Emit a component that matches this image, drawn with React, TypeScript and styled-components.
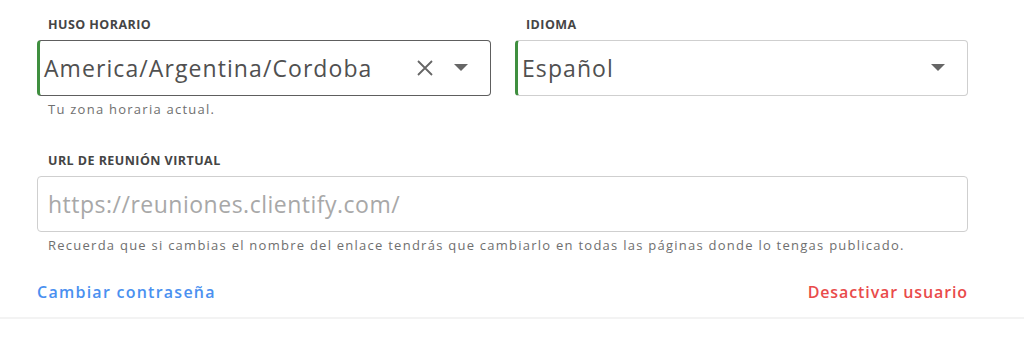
import React from "react";
import styled, { createGlobalStyle } from "styled-components";

const Global = createGlobalStyle`
  html, body { margin: 0; padding: 0; background: #ffffff; }
  body { font-family: "Open Sans", "Liberation Sans", sans-serif; }
`;

const Page = styled.div`
  width: 1024px;
  height: 350px;
  background: #fff;
  display: flex;
  flex-direction: column;
`;

const Form = styled.div`
  padding: 16px 56px 0 37px;
  display: flex;
  flex-direction: column;
`;

const Row = styled.div`
  display: grid;
  grid-template-columns: 454px 453px;
  column-gap: 24px;
`;

const Field = styled.div`
  display: flex;
  flex-direction: column;
`;

const Label = styled.div`
  font-size: 12.5px;
  font-weight: 700;
  color: #454545;
  text-transform: uppercase;
  padding-left: 11px;
  line-height: 17px;
  height: 24px;
  letter-spacing: 0.45px;
`;

const Box = styled.div<{ $focused?: boolean; $accent?: boolean }>`
  box-sizing: border-box;
  height: 56px;
  border: 1px solid ${(p) => (p.$focused ? "#5e5e5e" : "#cfcfcf")};
  border-left: ${(p) => (p.$accent ? "3px solid #3f8f3f" : `1px solid ${p.$focused ? "#5e5e5e" : "#cfcfcf"}`)};
  border-radius: 4px;
  display: flex;
  align-items: center;
  padding: 0 22px 0 ${(p) => (p.$accent ? "4px" : "10px")};
`;

const Value = styled.span<{ $placeholder?: boolean }>`
  flex: 1;
  font-size: 23px;
  letter-spacing: ${(p) => (p.$placeholder ? "0.5px" : "1.08px")};
  color: ${(p) => (p.$placeholder ? "#a8a8a8" : "#505050")};
  white-space: nowrap;
`;

const Icons = styled.div`
  display: flex;
  align-items: center;
  gap: 20px;
  color: #666;
`;

const Helper = styled.div`
  font-size: 13px;
  letter-spacing: 1.25px;
  color: #6f6f6f;
  padding-left: 11px;
  margin-top: 5px;
  line-height: 17px;
  white-space: nowrap;
`;

const Section = styled.div`
  margin-top: 34px;
  display: flex;
  flex-direction: column;
`;

const Actions = styled.div`
  display: flex;
  justify-content: space-between;
  margin-top: 27px;
  height: 36px;
`;

const LinkText = styled.a<{ $danger?: boolean }>`
  font-size: 16px;
  font-weight: 600;
  letter-spacing: ${(p) => (p.$danger ? "0.9px" : "1.25px")};
  color: ${(p) => (p.$danger ? "#e94b4b" : "#4a90f0")};
  text-decoration: none;
  cursor: pointer;
`;

const Divider = styled.div`
  height: 2px;
  background: #f3f3f3;
`;

const Clear = () => (
  <svg width="18" height="18" viewBox="0 0 18 18" fill="none">
    <path d="M2 2 L16 16 M16 2 L2 16" stroke="#666" strokeWidth="1.8" />
  </svg>
);

const Caret = () => (
  <svg width="14" height="8" viewBox="0 0 14 8">
    <path d="M0 0 L14 0 L7 7 Z" fill="#666" />
  </svg>
);

export default function App() {
  return (
    <Page>
      <Global />
      <Form>
        <Row>
          <Field>
            <Label>Huso horario</Label>
            <Box $focused $accent>
              <Value>America/Argentina/Cordoba</Value>
              <Icons>
                <Clear />
                <Caret />
              </Icons>
            </Box>
            <Helper>Tu zona horaria actual.</Helper>
          </Field>
          <Field>
            <Label>Idioma</Label>
            <Box $accent>
              <Value>Español</Value>
              <Icons>
                <Caret />
              </Icons>
            </Box>
          </Field>
        </Row>
        <Section>
          <Label>URL de reunión virtual</Label>
          <Box>
            <Value $placeholder>https://reuniones.clientify.com/</Value>
          </Box>
          <Helper>
            Recuerda que si cambias el nombre del enlace tendrás que cambiarlo en todas las páginas donde lo tengas publicado.
          </Helper>
        </Section>
        <Actions>
          <LinkText>Cambiar contraseña</LinkText>
          <LinkText $danger>Desactivar usuario</LinkText>
        </Actions>
      </Form>
      <Divider />
    </Page>
  );
}
